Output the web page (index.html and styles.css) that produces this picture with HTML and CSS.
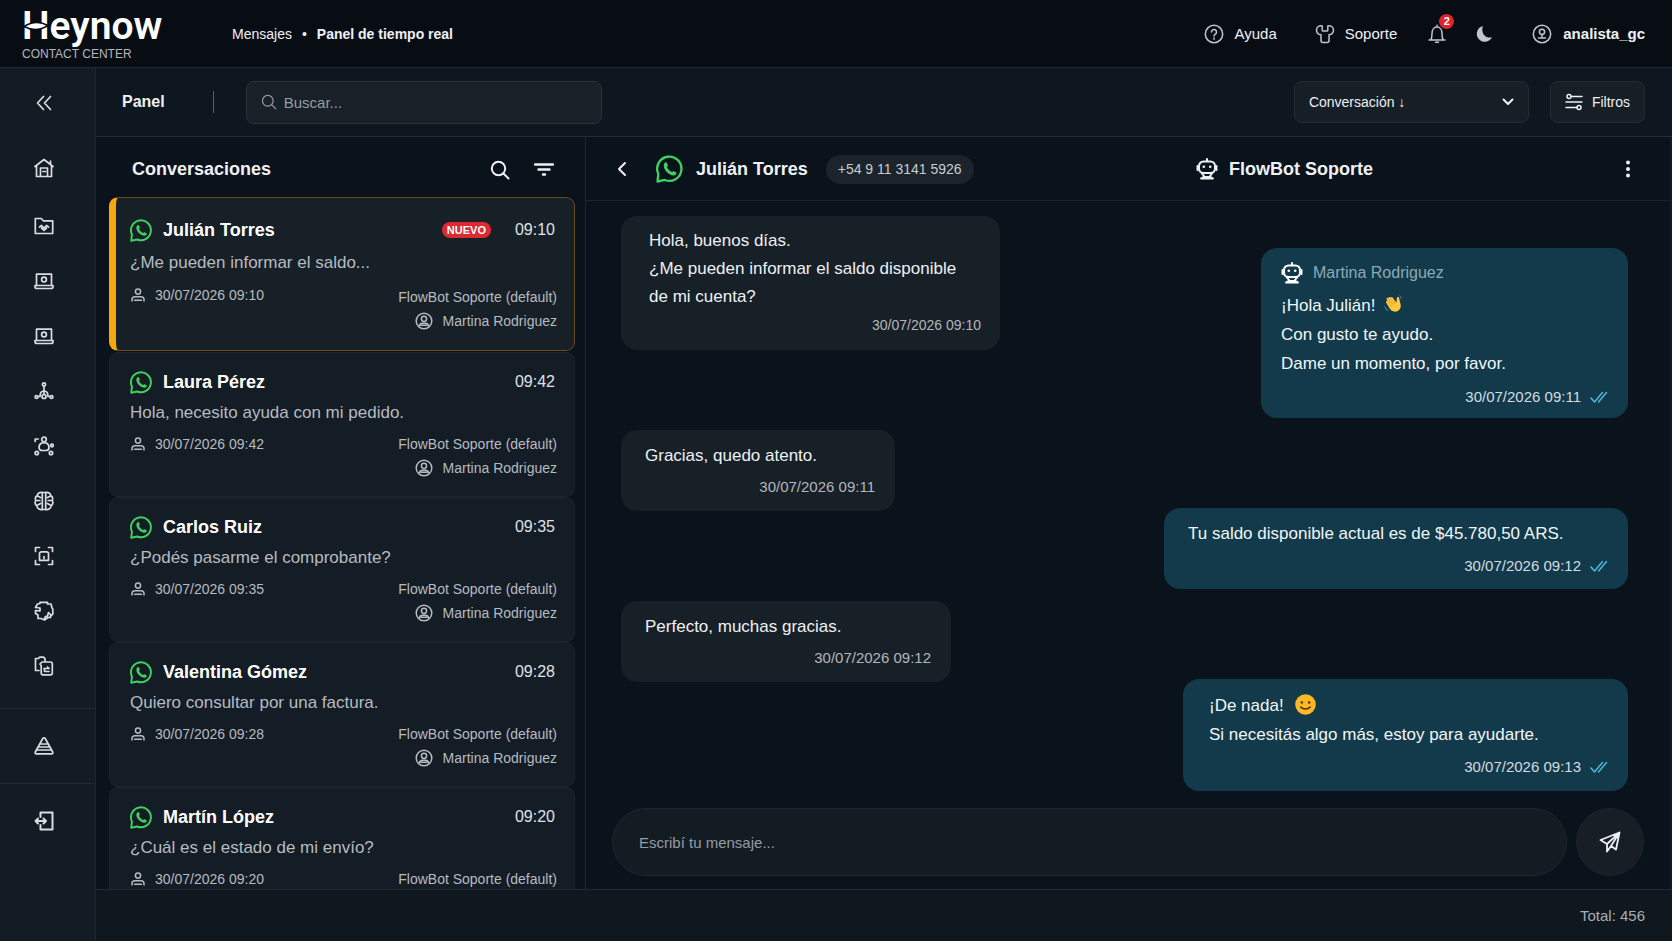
FILE: index.html
```html
<!DOCTYPE html>
<html lang="es">
<head>
    <meta charset="UTF-8">
    <meta name="viewport" content="width=device-width, initial-scale=1.0">
    <title>Heynow Contact Center</title>
    <link rel="stylesheet" href="styles.css">
</head>
<body>
    <!-- Icons shared by the page -->
    <svg class="sprite" aria-hidden="true">
        <symbol id="whatsapp" viewBox="0 0 24 24">
            <path d="M1.3 22.7L2 16.200A10.400 10.400 0 1 1 7.500 21.400z" stroke-width="2" stroke-linejoin="round"/>
            <path d="M7.6 6.7c.6-.6 1.5-.5 1.8.2l.8 1.8c.2.6-.7 1.2-.7 1.8.6 1.6 2.3 3.300 4 4 .7.100 1.200-.8 1.800-.6l1.700.9c.8.4.6 1.300 0 1.900-1.200 1.100-3 1.100-5.300-.2-2.200-1.200-4-3.200-4.700-5.300-.6-1.800-.4-3.600.6-4.500z" fill="currentColor" stroke="none"/>
        </symbol>
        <symbol id="person" viewBox="0 0 14 14">
            <circle cx="7" cy="3.600" r="2.600"/>
            <path d="M1 13v-1.500c0-1.700 1.200-2.800 3-2.800h6c1.800 0 3 1.100 3 2.800V13M3.500 12.300h7"/>
        </symbol>
        <symbol id="agent" viewBox="0 0 18 18">
            <circle cx="9" cy="9" r="7.800"/>
            <circle cx="9" cy="6.800" r="2.600"/>
            <path d="M4.200 14.200c.4-2.100 1.800-3 3.300-3h3c1.500 0 2.900.9 3.300 3M6 13.200h6"/>
        </symbol>
        <symbol id="robot" viewBox="0 0 22 22">
            <path d="M11 1v2.500M7.500 3.500h7a4.500 4.500 0 0 1 4.500 4.500v2.500a4.500 4.500 0 0 1-4.500 4.500h-7A4.500 4.500 0 0 1 3 10.500V8a4.500 4.500 0 0 1 4.500-4.500z" stroke-width="2"/>
            <path d="M1.500 8v4M20.500 8v4M6 15.500l2 2.500M16 15.500l-2 2.500M5 20.500l2.500-1.500h7l2.500 1.500z" stroke-width="2"/>
            <circle cx="7.800" cy="8.800" r="1.300" fill="currentColor" stroke="none"/>
            <circle cx="14.200" cy="8.800" r="1.300" fill="currentColor" stroke="none"/>
        </symbol>
        <symbol id="search" viewBox="0 0 20 20">
            <circle cx="8.500" cy="8.500" r="6.700"/>
            <path d="M13.500 13.500l5 5"/>
        </symbol>
        <symbol id="laptop" viewBox="0 0 20 18">
            <path d="M2.500 13V2.200h15V13M1 13.500h18v1c0 1.300-.8 2-2 2H3c-1.200 0-2-.7-2-2z"/>
            <circle cx="10" cy="7.500" r="2.400"/>
        </symbol>
        <symbol id="checks" viewBox="0 0 18 12">
            <path d="M1 7l3.500 4 8-9.500M8.500 11l8-9.500"/>
        </symbol>
    </svg>

    <header class="topbar">
        <a href="#" class="logo">
            <span class="logo-name">Heynow
                <svg class="logo-cut" viewBox="0 0 26 10" aria-hidden="true">
                    <path d="M1 5.500Q13-2 25 4.500Q13 12 1 5.500z"/>
                </svg>
            </span>
            <span class="logo-sub">CONTACT CENTER</span>
        </a>
        <nav class="breadcrumb">
            <a href="#">Mensajes</a>
            <span>•</span>
            <strong>Panel de tiempo real</strong>
        </nav>
        <div class="top-actions">
            <a href="#" class="top-link">
                <svg viewBox="0 0 20 20" width="20" height="20"><circle cx="10" cy="10" r="8.700"/><path d="M7.500 8a2.500 2.500 0 1 1 3.800 2.100c-.9.600-1.300 1-1.300 2M10 14v1.200"/></svg>
                Ayuda
            </a>
            <a href="#" class="top-link">
                <svg viewBox="0 0 20 20" width="20" height="20"><path d="M7.200 2C4.500 1 1.500 3 1.500 6c0 2.500 1.800 4.500 4.500 4.800v5.700c0 1.200.8 2 2 2h4c1.200 0 2-.8 2-2v-5.700c2.700-.3 4.500-2.300 4.500-4.800 0-3-3-5-5.700-4v4.200c0 .6-.3.900-.9.900H8.100c-.6 0-.9-.3-.9-.9z"/></svg>
                Soporte
            </a>
            <button class="icon-btn bell" aria-label="Notificaciones">
                <svg viewBox="0 0 20 20" width="20" height="20"><path d="M2 16h16M3.800 16c1-1.500 1.200-3.500 1.200-6.500C5 5.800 7 3 10 3s5 2.800 5 6.500c0 3 .2 5 1.200 6.500M10 1.200V3"/><path d="M8.500 18.300h3"/></svg>
                <span class="badge">2</span>
            </button>
            <button class="icon-btn moon" aria-label="Modo oscuro">
                <svg viewBox="0 0 18 18" width="18" height="18"><path d="M8 1A8 8 0 1 0 17 12.300C10 14 5.500 7.500 8 1z" fill="currentColor" stroke="none"/></svg>
            </button>
            <a href="#" class="top-link user">
                <svg viewBox="0 0 20 20" width="20" height="20"><circle cx="10" cy="10" r="8.700"/><circle cx="10" cy="7.800" r="2.600"/><path d="M10 10.500V13M6.500 14h7"/></svg>
                analista_gc
            </a>
        </div>
    </header>

    <aside class="sidebar">
        <button class="side-toggle" aria-label="Contraer menú">
            <svg viewBox="0 0 16 16" width="16" height="16"><path d="M7.500 1.500L1.500 8l6 6.500M14.500 1.500L8.500 8l6 6.500"/></svg>
        </button>
        <nav class="side-nav">
            <a href="#" class="side-link home" aria-label="Inicio">
                <svg viewBox="0 0 20 20" width="20" height="20"><path d="M1 8.500L10 1.500l9 7M2.500 7.500v11h15v-11M16.500 6V3M6.500 18V10h7v8M9 13.500h2.500"/></svg>
            </a>
            <a href="#" class="side-link" aria-label="Carpetas">
                <svg viewBox="0 0 20 20" width="20" height="20"><path d="M1.300 17.500v-15h6l2 2.300h9.400v12.700zM5.500 11l2-1.500L10 12l2.500-2.500 2 1.500M7.500 12l2.500 2.300 2.500-2.300"/></svg>
            </a>
            <a href="#" class="side-link" aria-label="Panel de agentes"><svg width="20" height="18"><use href="#laptop"/></svg></a>
            <a href="#" class="side-link" aria-label="Monitoreo"><svg width="20" height="18"><use href="#laptop"/></svg></a>
            <a href="#" class="side-link" aria-label="Flujos">
                <svg viewBox="0 0 20 20" width="20" height="20"><circle cx="10" cy="3.500" r="1.600"/><circle cx="2.500" cy="16" r="1.400"/><circle cx="17.500" cy="16" r="1.400"/><circle cx="10" cy="15.500" r="2"/><path d="M10 5v8.500M4 15.500h2c0-3.500 1.500-5.500 4-5.500s4 2 4 5.500h2"/></svg>
            </a>
            <a href="#" class="side-link" aria-label="Equipos">
                <svg viewBox="0 0 20 20" width="20" height="20"><circle cx="10" cy="3.500" r="2.300"/><path d="M7.500 7h5c1.700 1 2.500 2.700 2.500 4.500 0 2-1.500 3-3 3H8c-1.500 0-3-1-3-3C5 9.700 5.800 8 7.500 7z"/><circle cx="2.800" cy="17" r="1.700"/><circle cx="17" cy="17" r="1.700"/><circle cx="18" cy="9.500" r="1.300"/><path d="M1.200 5.500V3h3"/></svg>
            </a>
            <a href="#" class="side-link" aria-label="Inteligencia artificial">
                <svg viewBox="0 0 20 20" width="20" height="20"><path d="M8.300 1.300v17.400M11.700 1.300v17.400M8.300 1.500C5.500 1 3.500 2.500 3.300 4.500 1.500 5.500 1 7.500 1.800 9.300c-1 2-.8 4.200 1 5.500.4 2.500 2.700 4.300 5.500 3.700h3.400c2.800.6 5.100-1.200 5.500-3.700 1.800-1.300 2-3.500 1-5.500.8-1.800.3-3.800-1.500-4.800-.2-2-2.200-3.500-5-3zM3.500 5l3 1.500M1.800 9.500h4M3 14.500l3.500-2M16.500 5l-3 1.500M18.200 9.500h-4M17 14.500l-3.500-2"/></svg>
            </a>
            <a href="#" class="side-link" aria-label="Captura">
                <svg viewBox="0 0 20 20" width="20" height="20"><path d="M1.500 5.500v-4h4M14.500 1.500h4v4M18.500 14.500v4h-4M5.500 18.500h-4v-4M7.500 5.800h5c1.200 0 2 .8 2 2v6.500h-9V7.800c0-1.200.8-2 2-2zM10 10.500v2"/></svg>
            </a>
            <a href="#" class="side-link" aria-label="Integraciones">
                <svg viewBox="0 0 20 20" width="20" height="20"><path d="M6 2.500V1.300h7.500V3H17l1 4 .8 1v5L16.500 15v1.500H14L10.500 19 7 17.500H4V14l-2.500-1.500V9.500L6 10V7L1.500 6.500 3.500 3zM10.500 18.500c0-2 1-3.500 3-3.500l1-3.500 3 3"/></svg>
            </a>
            <a href="#" class="side-link" aria-label="Plantillas">
                <svg viewBox="0 0 20 20" width="20" height="20"><path d="M5 14.500H1.500V2.500h3l1-1.300h4l1.500 1.500V5M8 6h8.500c1 0 1.800.8 1.800 1.800V17c0 1-.8 1.800-1.800 1.800H9c-1 0-1.800-.8-1.800-1.800V9.500L6 8zM10 12.500h5l-1.500-1.500M10.500 12.500v3H15"/></svg>
            </a>
        </nav>
        <a href="#" class="side-link side-section" aria-label="Alertas">
            <svg viewBox="0 0 20 20" width="20" height="20"><path d="M8.800 2.500L1.300 16c-.4.900 0 1.800 1 1.800h15.400c1 0 1.400-.9 1-1.800L11.200 2.500c-.6-1-1.800-1-2.400 0zM6.500 8h7M5 11h10M3.500 14h13"/></svg>
        </a>
        <a href="#" class="side-link side-section" aria-label="Salir">
            <svg viewBox="0 0 20 20" width="20" height="20" class="bold-icon"><path d="M6.500 6V1.500h12v17h-12V14M1.500 10h10.500M4 7.500L1.500 10 4 12.500M9.500 7.500L12 10l-2.500 2.500"/></svg>
        </a>
    </aside>

    <section class="toolbar">
        <h1>Panel</h1>
        <span class="divider"></span>
        <label class="search-box">
            <svg width="16" height="16"><use href="#search"/></svg>
            <input type="text" placeholder="Buscar..." aria-label="Buscar">
        </label>
        <div class="select-box">
            <select aria-label="Ordenar por">
                <option>Conversación ↓</option>
                <option>Conversación ↑</option>
            </select>
            <svg viewBox="0 0 12 8" width="12" height="8"><path d="M1.500 1.500L6 6l4.500-4.500"/></svg>
        </div>
        <button class="filter-btn">
            <svg viewBox="0 0 18 18" width="18" height="18"><circle cx="4" cy="3.500" r="2"/><circle cx="14" cy="14.500" r="2"/><path d="M6 3.500h11M1 9h16M1 14.500h11"/></svg>
            Filtros
        </button>
    </section>

    <main class="content">
        <section class="conversations">
            <div class="list-head">
                <h2>Conversaciones</h2>
                <button class="icon-btn" aria-label="Buscar conversación"><svg width="20" height="20"><use href="#search"/></svg></button>
                <button class="icon-btn" aria-label="Filtrar"><svg viewBox="0 0 20 14" width="20" height="14"><path d="M1 1.500h18M4.500 6.500h11M9 11.500h2" stroke-width="2.400"/></svg></button>
            </div>
            <div class="list">
                <article class="card active">
                    <div class="card-top">
                        <svg class="wa"><use href="#whatsapp"/></svg>
                        <h3>Julián Torres</h3>
                        <span class="new">NUEVO</span>
                        <time>09:10</time>
                    </div>
                    <p>¿Me pueden informar el saldo...</p>
                    <div class="card-meta">
                        <span class="date"><svg width="14" height="14"><use href="#person"/></svg>30/07/2026 09:10</span>
                        <div class="assigned">
                            <span>FlowBot Soporte (default)</span>
                            <span class="agent"><svg width="18" height="18"><use href="#agent"/></svg>Martina Rodriguez</span>
                        </div>
                    </div>
                </article>
                <article class="card">
                    <div class="card-top">
                        <svg class="wa"><use href="#whatsapp"/></svg>
                        <h3>Laura Pérez</h3>
                        <time>09:42</time>
                    </div>
                    <p>Hola, necesito ayuda con mi pedido.</p>
                    <div class="card-meta">
                        <span class="date"><svg width="14" height="14"><use href="#person"/></svg>30/07/2026 09:42</span>
                        <div class="assigned">
                            <span>FlowBot Soporte (default)</span>
                            <span class="agent"><svg width="18" height="18"><use href="#agent"/></svg>Martina Rodriguez</span>
                        </div>
                    </div>
                </article>
                <article class="card">
                    <div class="card-top">
                        <svg class="wa"><use href="#whatsapp"/></svg>
                        <h3>Carlos Ruiz</h3>
                        <time>09:35</time>
                    </div>
                    <p>¿Podés pasarme el comprobante?</p>
                    <div class="card-meta">
                        <span class="date"><svg width="14" height="14"><use href="#person"/></svg>30/07/2026 09:35</span>
                        <div class="assigned">
                            <span>FlowBot Soporte (default)</span>
                            <span class="agent"><svg width="18" height="18"><use href="#agent"/></svg>Martina Rodriguez</span>
                        </div>
                    </div>
                </article>
                <article class="card">
                    <div class="card-top">
                        <svg class="wa"><use href="#whatsapp"/></svg>
                        <h3>Valentina Gómez</h3>
                        <time>09:28</time>
                    </div>
                    <p>Quiero consultar por una factura.</p>
                    <div class="card-meta">
                        <span class="date"><svg width="14" height="14"><use href="#person"/></svg>30/07/2026 09:28</span>
                        <div class="assigned">
                            <span>FlowBot Soporte (default)</span>
                            <span class="agent"><svg width="18" height="18"><use href="#agent"/></svg>Martina Rodriguez</span>
                        </div>
                    </div>
                </article>
                <article class="card">
                    <div class="card-top">
                        <svg class="wa"><use href="#whatsapp"/></svg>
                        <h3>Martín López</h3>
                        <time>09:20</time>
                    </div>
                    <p>¿Cuál es el estado de mi envío?</p>
                    <div class="card-meta">
                        <span class="date"><svg width="14" height="14"><use href="#person"/></svg>30/07/2026 09:20</span>
                        <div class="assigned">
                            <span>FlowBot Soporte (default)</span>
                        </div>
                    </div>
                </article>
            </div>
        </section>

        <section class="chat">
            <header class="chat-head">
                <div class="contact">
                    <button class="icon-btn" aria-label="Volver"><svg viewBox="0 0 10 16" width="10" height="16"><path d="M8 2L2 8l6 6" stroke-width="2"/></svg></button>
                    <svg class="wa wa-big"><use href="#whatsapp"/></svg>
                    <h2>Julián Torres</h2>
                    <span class="phone">+54 9 11 3141 5926</span>
                </div>
                <div class="bot">
                    <svg width="22" height="22"><use href="#robot"/></svg>
                    <h2>FlowBot Soporte</h2>
                    <button class="icon-btn more" aria-label="Más opciones"><svg viewBox="0 0 4 18" width="4" height="18"><g fill="currentColor" stroke="none"><circle cx="2" cy="2.500" r="2"/><circle cx="2" cy="9" r="2"/><circle cx="2" cy="15.500" r="2"/></g></svg></button>
                </div>
            </header>

            <div class="messages">
                <div class="column received">
                    <div class="bubble question">
                        <p>Hola, buenos días.<br>¿Me pueden informar el saldo disponible<br>de mi cuenta?</p>
                        <time>30/07/2026 09:10</time>
                    </div>
                    <div class="bubble thanks">
                        <p>Gracias, quedo atento.</p>
                        <time>30/07/2026 09:11</time>
                    </div>
                    <div class="bubble perfect">
                        <p>Perfecto, muchas gracias.</p>
                        <time>30/07/2026 09:12</time>
                    </div>
                </div>
                <div class="column sent">
                    <div class="bubble hello">
                        <div class="author"><svg width="22" height="22"><use href="#robot"/></svg>Martina Rodriguez</div>
                        <p>¡Hola Julián!
                            <svg class="emoji" viewBox="0 0 20 20" role="img" aria-label="Saludo">
                                <path d="M2.500 8.500C1.500 7 3 6 4 7L3 5C2.300 3.300 4 2.500 5 3.800 4.800 2 6.500 1.800 7.300 3c.5-1.300 1.900-1 2.500 0l4 5.500.5-5c.2-1.700 2.400-1.600 2.500 0 .2 2 2 6 1.800 9-.2 3.500-3 6-6.300 6-3 0-4.800-1.500-6.300-4z" fill="#ffc83d"/>
                                <path d="M4 7l4.500 5.500M5 4l5 6.500M7.300 3l5 6.500" stroke="#e08f1c" stroke-width="0.800" fill="none"/>
                                <path d="M1 13c.5 2.200 1.500 3.500 3.500 4M17.500 1c1 .6 1.500 1.500 1.500 2.700" stroke="#3f9fc0" stroke-width="1" fill="none"/>
                            </svg>
                            <br>Con gusto te ayudo.<br>Dame un momento, por favor.</p>
                        <time>30/07/2026 09:11 <svg width="18" height="12"><use href="#checks"/></svg></time>
                    </div>
                    <div class="bubble balance">
                        <p>Tu saldo disponible actual es de $45.780,50 ARS.</p>
                        <time>30/07/2026 09:12 <svg width="18" height="12"><use href="#checks"/></svg></time>
                    </div>
                    <div class="bubble welcome">
                        <p>¡De nada!
                            <svg class="emoji smile" viewBox="0 0 20 20" role="img" aria-label="Sonrisa">
                                <circle cx="10" cy="10" r="9.800" fill="#fdb827" stroke="none"/>
                                <circle cx="6.500" cy="8" r="1.200" fill="#4a3410" stroke="none"/>
                                <circle cx="13.500" cy="8" r="1.200" fill="#4a3410" stroke="none"/>
                                <path d="M5.500 12.500c2.500 2.300 6.500 2.300 9 0" stroke="#4a3410" fill="none"/>
                            </svg>
                            <br>Si necesitás algo más, estoy para ayudarte.</p>
                        <time>30/07/2026 09:13 <svg width="18" height="12"><use href="#checks"/></svg></time>
                    </div>
                </div>
            </div>

            <form class="composer">
                <input type="text" placeholder="Escribí tu mensaje..." aria-label="Escribí tu mensaje">
                <button type="button" aria-label="Enviar">
                    <svg viewBox="0 0 22 22" width="22" height="22"><path d="M1.500 9L20.500 1.500 17 18.500l-5-3.500-4 5.500V13z M8 13l12.500-11.500L12 15" stroke-width="1.800"/></svg>
                </button>
            </form>
        </section>
    </main>

    <footer class="footer">Total: 456</footer>
</body>
</html>
```
FILE: styles.css
```css
* {
    box-sizing: border-box;
}

body {
    margin: 0;
    height: 100vh;
    display: grid;
    grid-template-columns: 96px 1fr;
    grid-template-rows: 68px 69px 1fr 52px;
    grid-template-areas:
        "top top"
        "side tools"
        "side main"
        "side foot";
    background-color: #0a121b;
    color: #eef1f4;
    font-family: "Liberation Sans", Arial, sans-serif;
    font-size: 14px;
    overflow: hidden;
}

h1, h2, h3, p {
    margin: 0;
}

h2, h3 {
    font-size: 18px;
}

a {
    color: inherit;
    text-decoration: none;
}

button, input, select {
    font-family: inherit;
    color: inherit;
}

button {
    cursor: pointer;
}

svg {
    fill: none;
    stroke: currentColor;
    stroke-width: 1.5;
    stroke-linecap: round;
    stroke-linejoin: round;
    flex-shrink: 0;
}

.sprite {
    position: absolute;
    width: 0;
    height: 0;
}

.icon-btn {
    display: flex;
    padding: 0;
    border: none;
    background: none;
}

/* Top bar */
.topbar {
    grid-area: top;
    display: flex;
    align-items: center;
    padding: 0 27px 0 22px;
    background-color: #080d14;
    border-bottom: 1px solid #1f272f;
}

.logo {
    width: 210px;
    display: flex;
    flex-direction: column;
}

.logo-name {
    position: relative;
    color: #fff;
    font-family: Roboto, "Liberation Sans", sans-serif;
    font-size: 39px;
    font-weight: 600;
    line-height: 40px;
}

.logo-cut {
    position: absolute;
    left: 1px;
    top: 15px;
    width: 26px;
    height: 10px;
    fill: #fff;
    stroke: #080d14;
}

.logo-sub {
    color: #b3b7bc;
    font-size: 12px;
    line-height: 16px;
}

.breadcrumb {
    display: flex;
    gap: 10px;
}

.top-actions {
    display: flex;
    align-items: center;
    margin-left: auto;
    font-size: 15px;
}

.top-actions svg {
    color: #c2c6cb;
}

.top-link {
    display: flex;
    align-items: center;
    gap: 10px;
    margin-right: 38px;
}

.bell {
    position: relative;
    margin: 0 28px 0 -8px;
}

.badge {
    position: absolute;
    left: 12px;
    top: -10px;
    width: 15px;
    height: 15px;
    border-radius: 50%;
    background-color: #e0242c;
    color: #fff;
    font-size: 11px;
    font-weight: bold;
    line-height: 15px;
    text-align: center;
}

.user {
    margin: 0 0 0 39px;
    gap: 11px;
    font-weight: bold;
}

/* Left menu */
.sidebar {
    grid-area: side;
    display: flex;
    flex-direction: column;
    background-color: #131b24;
    border-right: 1px solid #1e262e;
    color: #d9dde1;
}

.sidebar svg {
    stroke-width: 1.7;
}

.side-toggle {
    display: flex;
    align-items: center;
    justify-content: center;
    height: 70px;
    padding: 0 8px 0 0;
    border: none;
    background: none;
}

.side-nav {
    padding-bottom: 15px;
}

.side-link {
    display: flex;
    align-items: center;
    justify-content: center;
    height: 55px;
    padding-right: 8px;
}

.home {
    height: 60px;
}

.side-section {
    height: 75px;
    border-top: 1px solid #222a32;
}

.sidebar .bold-icon {
    stroke-width: 2;
}

/* Toolbar */
.toolbar {
    grid-area: tools;
    display: flex;
    align-items: center;
    padding: 0 27px 0 26px;
    background-color: #0e161f;
    border-bottom: 1px solid #252d35;
}

.toolbar h1 {
    font-size: 16px;
}

.divider {
    width: 1px;
    height: 22px;
    margin: 0 32px 0 48px;
    background-color: #59616a;
}

.search-box {
    display: flex;
    align-items: center;
    gap: 5px;
    width: 356px;
    height: 43px;
    padding: 0 14px;
    border: 1px solid #2a323a;
    border-radius: 8px;
    background-color: #182028;
    color: #969ca3;
}

.search-box input {
    flex: 1;
    min-width: 0;
    border: none;
    outline: none;
    background: none;
    font-size: 15px;
}

::placeholder {
    color: #969ca3;
    opacity: 1;
}

.select-box {
    position: relative;
    width: 235px;
    margin: 0 21px 0 auto;
}

.select-box select {
    width: 100%;
    height: 42px;
    padding: 0 14px;
    border: 1px solid #242c34;
    border-radius: 8px;
    background-color: #161e26;
    font-size: 14px;
    appearance: none;
}

.select-box svg {
    position: absolute;
    right: 15px;
    top: 17px;
    stroke-width: 2;
}

.filter-btn {
    display: flex;
    align-items: center;
    gap: 9px;
    height: 42px;
    padding: 0 14px;
    border: 1px solid #242c34;
    border-radius: 8px;
    background-color: #161e26;
    font-size: 14px;
}

/* Conversations list */
.content {
    grid-area: main;
    display: grid;
    grid-template-columns: 490px 1fr;
    min-height: 0;
}

.conversations {
    display: flex;
    flex-direction: column;
    min-height: 0;
    padding: 0 10px 0 13px;
    border-right: 1px solid #1e262e;
}

.list-head {
    display: flex;
    align-items: center;
    gap: 24px;
    height: 60px;
    flex-shrink: 0;
    padding: 5px 21px 0 23px;
}

.list-head h2 {
    margin-right: auto;
}

.list-head svg {
    stroke-width: 2;
}

.list {
    flex: 1;
    min-height: 0;
    overflow: hidden;
}

.card {
    padding: 17px 17px 16px 20px;
    border: 1px solid #1c252d;
    border-radius: 9px;
    background-color: #141c25;
    color: #b6bbc0;
}

.card.active {
    padding: 20px 17px 17px 14px;
    margin-bottom: 1px;
    border: 1px solid #6a4a1c;
    border-left: 7px solid #f5a80c;
    background-color: #182027;
}

.card-top {
    display: flex;
    align-items: center;
    height: 24px;
    padding-right: 2px;
}

.wa {
    width: 23px;
    height: 23px;
    color: #3fd160;
}

.card-top h3 {
    margin: 0 auto 0 10px;
    color: #fff;
}

.card-top time {
    color: #dfe2e5;
    font-size: 16px;
}

.new {
    margin-right: 24px;
    padding: 0 5px;
    border-radius: 8px;
    background-color: #dc2a30;
    color: #fff;
    font-size: 11px;
    font-weight: bold;
    line-height: 16px;
}

.card p {
    margin: 7px 0;
    font-size: 17px;
    line-height: 24px;
}

.card.active p {
    margin: 9px 0 8px;
}

.card-meta {
    display: flex;
    justify-content: space-between;
    line-height: 24px;
}

.date, .agent {
    display: flex;
    align-items: center;
    gap: 10px;
    height: 24px;
}

.date {
    padding-left: 1px;
}

.assigned {
    display: flex;
    flex-direction: column;
    align-items: flex-end;
}

.active .assigned {
    margin-top: 2px;
}

/* Chat */
.chat {
    display: flex;
    flex-direction: column;
    min-width: 0;
    border-right: 2px solid #121a22;
}

.chat-head {
    display: flex;
    height: 64px;
    padding-top: 1px;
    border-bottom: 1px solid #1c242c;
}

.contact, .bot {
    display: flex;
    align-items: center;
}

.contact {
    flex: 1;
    padding-left: 31px;
}

.wa-big {
    width: 28px;
    height: 28px;
    margin: 0 12px 0 29px;
}

.phone {
    margin-left: 18px;
    padding: 0 12px;
    border-radius: 15px;
    background-color: #1b232b;
    color: #c9cdd1;
    line-height: 29px;
}

.bot {
    width: 474px;
    gap: 11px;
    padding-right: 40px;
}

.more {
    margin-left: auto;
}

.messages {
    flex: 1;
    display: flex;
    justify-content: space-between;
    min-height: 0;
    padding: 0 42px 0 35px;
}

.column {
    display: flex;
    flex-direction: column;
}

.received {
    padding-top: 15px;
}

.sent {
    align-items: flex-end;
    padding-top: 47px;
}

.bubble {
    padding: 12px 20px 10px 24px;
    margin-bottom: 90px;
    border-radius: 16px;
    font-size: 17px;
    line-height: 28px;
}

.received .bubble {
    background-color: #171f27;
}

.sent .bubble {
    background-color: #123a4a;
    color: #f1f6f8;
    line-height: 29px;
}

.bubble time {
    display: flex;
    align-items: center;
    justify-content: flex-end;
    gap: 9px;
    margin-top: 3px;
    color: #b2b7bc;
    font-size: 15px;
}

.bubble.question time {
    margin-top: 0;
    font-size: 14px;
}

.sent .bubble time {
    color: #d3dde2;
}

.bubble time svg {
    color: #4fb6dc;
}

.question {
    width: 379px;
    padding: 11px 19px 11px 28px;
    margin-bottom: 80px;
}

.thanks {
    width: 274px;
}

.perfect {
    width: 330px;
}

.hello {
    width: 367px;
    padding: 10px 20px 7px;
}

.hello p {
    margin: 4px 0;
}

.author {
    display: flex;
    align-items: center;
    gap: 10px;
    color: #8ea9b6;
    font-size: 16px;
}

.author svg {
    color: #fff;
}

.balance {
    width: 464px;
    padding-top: 11px;
    padding-bottom: 9px;
}

.welcome {
    width: 445px;
    padding-left: 26px;
    margin-bottom: 0;
}

.emoji {
    width: 18px;
    height: 18px;
    margin-left: 4px;
    vertical-align: -2px;
    stroke: none;
}

.smile {
    width: 21px;
    height: 21px;
    margin-left: 7px;
    vertical-align: -4px;
}

.composer {
    display: flex;
    gap: 9px;
    padding: 0 26px 13px;
}

.composer input {
    flex: 1;
    height: 68px;
    padding: 0 26px;
    border: 1px solid #1e262e;
    border-radius: 34px;
    outline: none;
    background-color: #131b23;
    font-size: 15px;
}

.composer button {
    display: flex;
    align-items: center;
    justify-content: center;
    width: 68px;
    height: 68px;
    border: 1px solid #1b232b;
    border-radius: 50%;
    background-color: #171e26;
    padding: 0;
}

/* Footer */
.footer {
    grid-area: foot;
    display: flex;
    align-items: center;
    justify-content: flex-end;
    padding: 0 27px;
    background-color: #0f171f;
    border-top: 1px solid #212931;
    color: #a9aeb4;
    font-size: 15px;
}
```
